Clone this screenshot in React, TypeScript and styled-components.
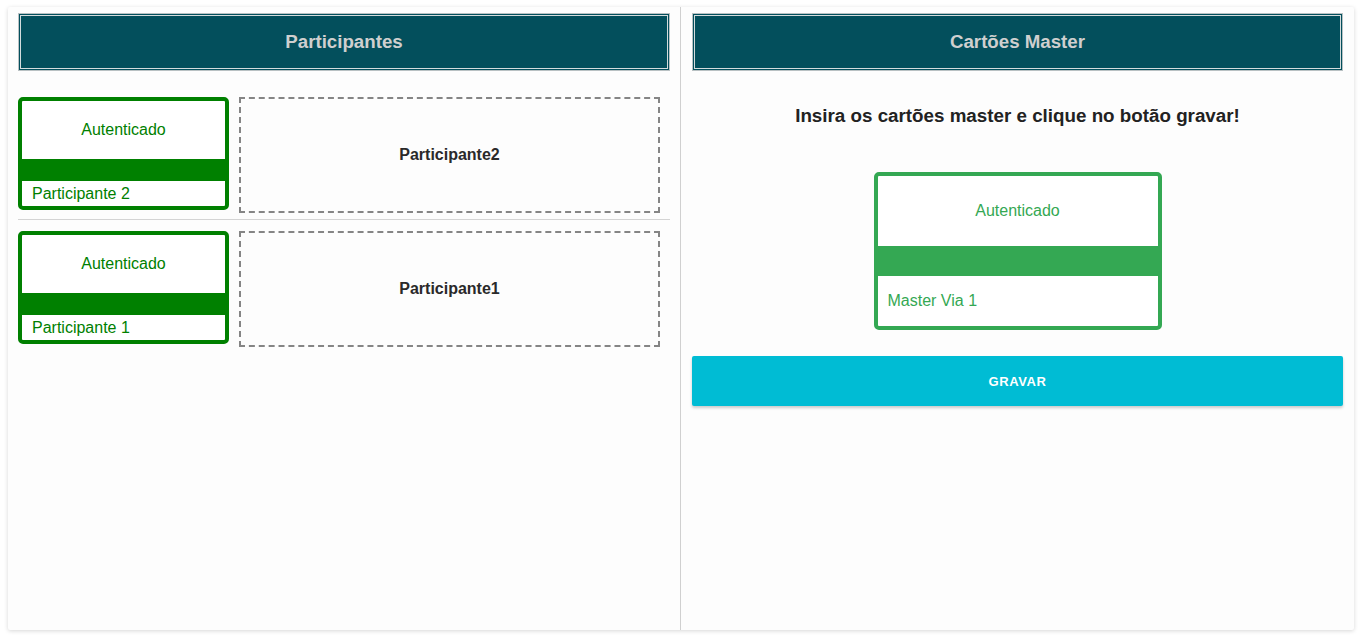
import React from 'react';
import styled, { createGlobalStyle } from 'styled-components';

interface Participant {
    id: number;
    name: string;
    slot: string;
}

const participants: Participant[] = [
    { id: 2, name: 'Participante 2', slot: 'Participante2' },
    { id: 1, name: 'Participante 1', slot: 'Participante1' },
];

const GlobalStyle = createGlobalStyle`
    html, body {
        margin: 0;
        padding: 0;
        background: #ffffff;
        font-family: "Liberation Sans", Arial, sans-serif;
    }
    * {
        box-sizing: border-box;
    }
`;

const Page = styled.div`
    height: 100vh;
    padding: 7px 6px 7px 8px;
`;

const Board = styled.div`
    height: 100%;
    display: grid;
    grid-template-columns: 1fr 1fr;
    background-color: #fdfdfd;
    border-radius: 2px;
    box-shadow: 0 1px 4px rgba(0, 0, 0, 0.16);
`;

const Column = styled.section<{ $divider?: boolean }>`
    padding: ${(p) => (p.$divider ? '6px 10px 0 10px' : '6px 11px 0 11px')};
    border-right: ${(p) => (p.$divider ? '1px solid #d0d0d0' : 'none')};
    display: flex;
    flex-direction: column;
`;

const Header = styled.div`
    height: 58px;
    display: flex;
    align-items: center;
    justify-content: center;
    background-color: #034f5c;
    border: 1px solid #b9c1c3;
    box-shadow: inset 0 0 0 1px #034f5c, inset 0 0 0 2px #d4dcdd;
    color: #cfcfcf;
    font-size: 18.7px;
    font-weight: bold;
`;

const RowList = styled.div`
    margin-top: 26px;
    display: flex;
    flex-direction: column;
`;

const Row = styled.div`
    display: flex;
    align-items: flex-start;
    gap: 10px;
    padding-right: 10px;

    & + & {
        margin-top: 6px;
        padding-top: 11px;
        border-top: 1px solid #d4d4d4;
    }
`;

const StatusCard = styled.div<{ $color: string; $width: number }>`
    width: ${(p) => p.$width}px;
    flex-shrink: 0;
    border: 4px solid ${(p) => p.$color};
    border-radius: 5px;
    background-color: #ffffff;
    color: ${(p) => p.$color};
    font-size: 16px;
    display: flex;
    flex-direction: column;
`;

const StatusTop = styled.div<{ $height: number }>`
    height: ${(p) => p.$height}px;
    display: flex;
    align-items: center;
    justify-content: center;
`;

const StatusBar = styled.div<{ $color: string; $height: number }>`
    height: ${(p) => p.$height}px;
    background-color: ${(p) => p.$color};
`;

const StatusName = styled.div<{ $height: number }>`
    height: ${(p) => p.$height}px;
    display: flex;
    align-items: center;
    padding-left: 10px;
`;

const Slot = styled.div`
    flex: 1;
    height: 116px;
    border: 2px dashed #858585;
    display: flex;
    align-items: center;
    justify-content: center;
    color: #2a2a2a;
    font-size: 16px;
    font-weight: bold;
`;

const Instructions = styled.p`
    margin: 34px 0 0;
    text-align: center;
    color: #222222;
    font-size: 18.8px;
    font-weight: bold;
    line-height: 22px;
`;

const MasterWrap = styled.div`
    margin-top: 45px;
    display: flex;
    justify-content: center;
`;

const RecordButton = styled.button`
    margin-top: 26px;
    height: 50px;
    width: 100%;
    border: none;
    border-radius: 2px;
    background-color: #00bcd4;
    color: #ffffff;
    font-family: "Liberation Sans", Arial, sans-serif;
    font-size: 13px;
    font-weight: bold;
    letter-spacing: 0.6px;
    box-shadow: 0 2px 3px rgba(0, 0, 0, 0.2);
    cursor: pointer;
`;

const App: React.FC = () => {
    return (
        <Page>
            <GlobalStyle />
            <Board>
                <Column $divider>
                    <Header>Participantes</Header>
                    <RowList>
                        {participants.map((p) => (
                            <Row key={p.id}>
                                <StatusCard $color="#008000" $width={211}>
                                    <StatusTop $height={58}>Autenticado</StatusTop>
                                    <StatusBar $color="#008000" $height={22} />
                                    <StatusName $height={25}>{p.name}</StatusName>
                                </StatusCard>
                                <Slot>{p.slot}</Slot>
                            </Row>
                        ))}
                    </RowList>
                </Column>
                <Column>
                    <Header>Cartões Master</Header>
                    <Instructions>Insira os cartões master e clique no botão gravar!</Instructions>
                    <MasterWrap>
                        <StatusCard $color="#34a853" $width={288}>
                            <StatusTop $height={70}>Autenticado</StatusTop>
                            <StatusBar $color="#34a853" $height={30} />
                            <StatusName $height={50}>Master Via 1</StatusName>
                        </StatusCard>
                    </MasterWrap>
                    <RecordButton>GRAVAR</RecordButton>
                </Column>
            </Board>
        </Page>
    );
};

export default App;
